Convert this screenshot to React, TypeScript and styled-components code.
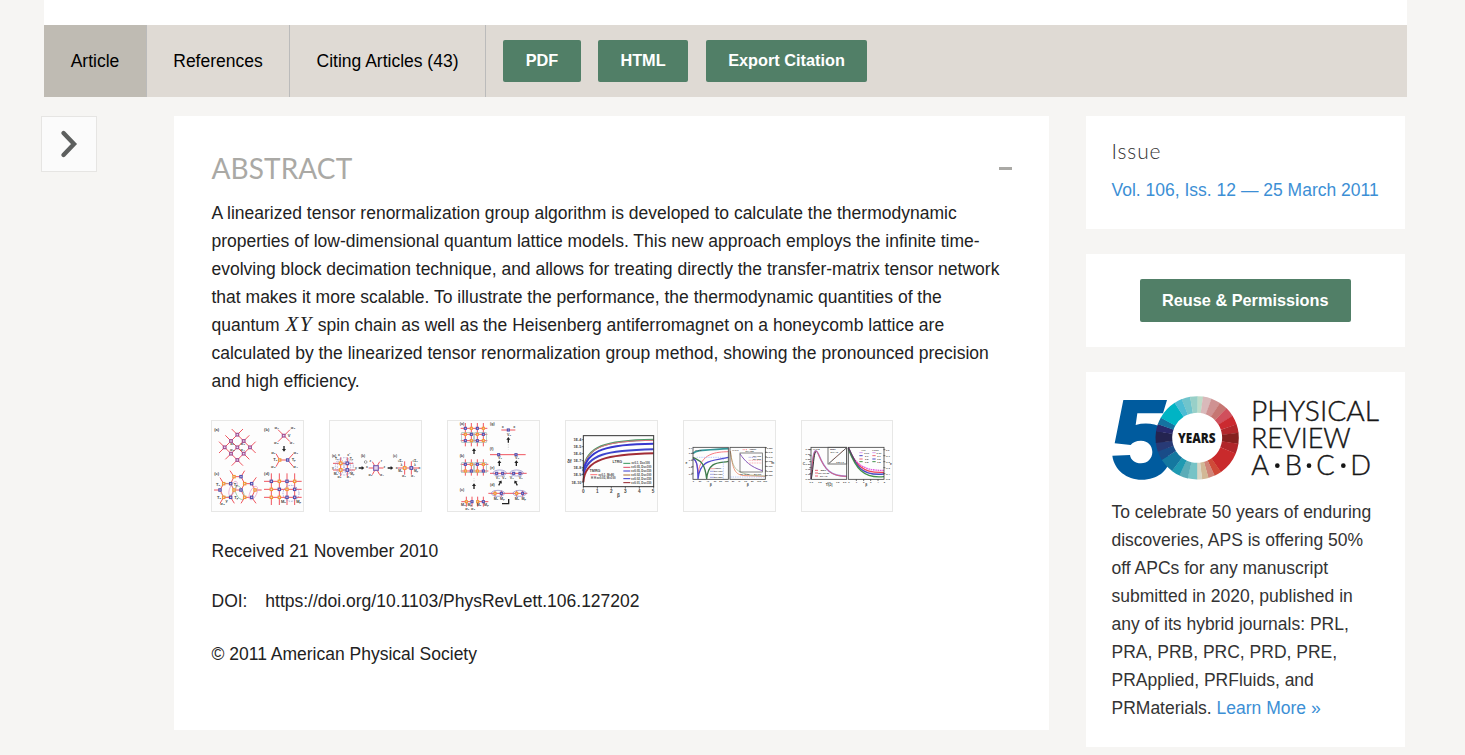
import React from "react";
import styled, { createGlobalStyle } from "styled-components";

const GlobalStyle = createGlobalStyle`
  * { box-sizing: border-box; }
  html, body { margin: 0; height: 755px; overflow: hidden; background: #f6f5f3; }
  body { font-family: "Liberation Sans", Arial, sans-serif; font-size: 17.5px; color: #222; }
`;

const Page = styled.div`
  width: 1465px;
  height: 755px;
  overflow: hidden;
`;

const Masthead = styled.div`
  width: 1363px;
  height: 25px;
  margin-left: 44px;
  background: #fff;
`;

const TabBar = styled.nav`
  display: flex;
  align-items: center;
  width: 1363px;
  height: 72px;
  margin-left: 44px;
  background: #dfdad4;
`;

const Tab = styled.a<{ $width: number; $active?: boolean }>`
  display: flex;
  align-items: center;
  justify-content: center;
  width: ${(p) => p.$width}px;
  height: 72px;
  border-right: 1px solid #bbb;
  background: ${(p) => (p.$active ? "#bfbbb3" : "transparent")};
  color: #000;
  white-space: nowrap;
`;

const TabActions = styled.div`
  display: flex;
  align-items: center;
  margin-left: 17px;
`;

const Button = styled.a<{ $width: number; $height?: number; $gap?: number }>`
  display: flex;
  align-items: center;
  justify-content: center;
  width: ${(p) => p.$width}px;
  height: ${(p) => p.$height ?? 42}px;
  margin-right: ${(p) => p.$gap ?? 0}px;
  padding-bottom: 1px;
  border-radius: 2px;
  background: #517f67;
  color: #fff;
  font-size: 16.3px;
  font-weight: 700;
  white-space: nowrap;
`;

const Columns = styled.div`
  display: flex;
  align-items: flex-start;
  padding: 19px 0 0 41px;
`;

const Toggle = styled.button`
  display: flex;
  align-items: center;
  justify-content: center;
  width: 56px;
  height: 56px;
  padding: 0 0 1px;
  border: 1px solid #e6e5e3;
  background: #fbfbfb;
`;

const Article = styled.main`
  width: 875px;
  height: 614px;
  margin: 0 37px 0 77px;
  padding: 35px 37px 0 37.5px;
  background: #fff;
`;

const SectionHead = styled.header`
  display: flex;
  align-items: center;
  justify-content: space-between;
  height: 35px;
`;

const SectionTitle = styled.h2`
  margin: 0;
  color: #aaa9a5;
  font: 400 28px/35px Lato, sans-serif;
  letter-spacing: 0.1px;
`;

const Minus = styled.span`
  width: 13px;
  height: 3px;
  background: #aaa9a5;
`;

const Abstract = styled.p`
  margin: 13px 0 25px;
  line-height: 28px;
  white-space: nowrap;
`;

const MathText = styled.i`
  padding-left: 1px;
  font: italic 21px/20px "Liberation Serif", serif;
  letter-spacing: 1.4px;
`;

const Thumbs = styled.div`
  display: flex;
  gap: 25px;
  margin-left: -0.5px;
`;

const Thumb = styled.a`
  display: block;
  width: 93px;
  height: 92px;
  border: 1px solid #e7e7e6;
  background: #fdfdfd;
  svg { display: block; }
  &:last-child { width: 92px; }
`;

const Meta = styled.p<{ $top: number }>`
  display: flex;
  gap: 17.8px;
  margin: ${(p) => p.$top}px 0 0;
  line-height: 28px;
`;

const Aside = styled.aside`
  display: flex;
  flex-direction: column;
  gap: 25px;
  width: 319px;
`;

const Card = styled.section<{ $height: number }>`
  height: ${(p) => p.$height}px;
  padding: 24px 26px 0 25.5px;
  background: #fff;
  white-space: nowrap;
`;

const CardTitle = styled.h3`
  margin: -1px 0 17px;
  color: #333;
  font: 300 21px/24px Lato, sans-serif;
  letter-spacing: 0.9px;
`;

const Centered = styled.div`
  display: flex;
  justify-content: center;
  padding-top: 1px;
`;

const Link = styled.a`
  color: #3c8fd5;
`;

const Promo = styled.p`
  margin: 18px 0 0;
  color: #333;
  line-height: 28px;
`;

const RED = "#f0555f";
const ORANGE = "#f39a35";
const NAVY = "#5350ae";
const PURPLE = "#a34e91";

type Pt = [number, number];

const Nodes = ({ at, color, s = 8 }: { at: Pt[]; color: string; s?: number }) => (
  <g fill="#e3d5ee" stroke={color} strokeWidth={3.4}>
    {at.map(([x, y]) => (
      <rect key={`${x}-${y}`} x={x - s / 2} y={y - s / 2} width={s} height={s} />
    ))}
  </g>
);

const Bonds = ({ d }: { d: string }) => <path d={d} stroke={RED} strokeWidth={3} fill="none" />;

const Marks = ({ items, size = 12 }: { items: [number, number, string][]; size?: number }) => (
  <g fontFamily="Liberation Sans, sans-serif" fontSize={size} fontWeight={700} fill="#444" textAnchor="middle">
    {items.map(([x, y, t]) => (
      <text key={`${x}-${y}`} x={x} y={y}>{t}</text>
    ))}
  </g>
);

const Arrow = ({ x, y, r }: { x: number; y: number; r: number }) => (
  <path d="M-8-2H1V-6L9 0L1 6V2H-8Z" fill="#222" transform={`translate(${x} ${y}) rotate(${r})`} />
);

const Plate = ({ box, children }: { box: string; children: React.ReactNode }) => (
  <Thumb>
    <svg width="91" height="90" viewBox={box}>{children}</svg>
  </Thumb>
);

const LatticeFigure = () => (
  <Plate box="36 33 273 270">
    <Bonds d="M57 129L129 57M76 148L148 76M95 167L167 95M95 57L167 129M76 76L148 148M57 95L129 167M234 59L270 95M270 59L234 95M228 131L239 150H263L280 131M228 170L239 150M263 150L280 170" />
    <Nodes color={PURPLE} at={[[112, 74], [93, 93], [131, 93], [74, 112], [112, 112], [150, 112], [93, 131], [131, 131], [112, 150], [251, 77]]} />
    <Bonds d="M90 182L102 200H123L134 182M102 200L92 221H71L60 240L71 262H92L102 240L92 221M123 200L134 221H155L165 240L155 262H134L123 240L134 221M102 240H123M165 240H185M60 240H42M71 221L60 203M155 221L169 202M71 262L60 280M92 262L103 280M134 262L123 280M155 262L168 280" />
    <g fill="none" strokeWidth={2}>
      <circle cx="80" cy="240" r="20" stroke="#9fc7a2" strokeDasharray="5 3" />
      <ellipse cx="119" cy="248" rx="11" ry="22" stroke="#83be91" transform="rotate(-25 119 248)" />
      <ellipse cx="99" cy="235" rx="9" ry="23" stroke="#e49dc8" transform="rotate(25 99 235)" />
      <ellipse cx="160" cy="249" rx="10" ry="22" stroke="#e49dc8" transform="rotate(25 160 249)" />
    </g>
    <Nodes color={ORANGE} at={[[239, 150], [102, 200], [71, 221], [134, 221], [102, 240], [165, 240], [71, 262], [134, 262]]} s={7} />
    <Nodes color={NAVY} at={[[263, 150], [123, 200], [92, 221], [155, 221], [60, 240], [123, 240], [92, 262], [155, 262]]} s={7} />
    <Bonds d="M192 214H305M192 238H305M192 262H305M214 190V285M238 190V285M261 190V285M284 190V285" />
    <circle cx="273" cy="250" r="24" fill="none" stroke="#8787c4" strokeWidth={2} strokeDasharray="5 3" />
    <Nodes color={ORANGE} at={[[238, 214], [284, 214], [214, 238], [261, 238], [238, 262], [214, 262]]} s={7} />
    <Nodes color={NAVY} at={[[214, 214], [261, 214], [238, 238], [284, 238], [261, 262], [284, 262]]} s={7} />
    <Arrow x={252} y={116} r={90} />
    <Marks items={[[50, 64, "(a)"], [200, 64, "(b)"], [50, 195, "(c)"], [200, 195, "(d)"], [230, 58, "σ₁"], [279, 58, "σ₂"], [229, 103, "σ₃"], [276, 103, "σ₄"], [267, 80, "V"], [97, 106, "σ₁"], [128, 106, "σ₂"], [97, 122, "σ₃"], [128, 122, "σ₄"], [226, 153, "Tₐ"], [281, 153, "Tᵦ"], [220, 174, "σ₃"], [287, 174, "σ₄"], [220, 131, "σ₁"], [287, 131, "σ₂"], [54, 227, "Tₐ"], [107, 227, "Tᵦ"], [57, 268, "Tₐ"], [109, 268, "Tᵦ"], [80, 276, "y"], [68, 286, "σ₃"], [250, 279, "Mₐ"], [296, 279, "Mᵦ"]]} />
  </Plate>
);

const ContractionFigure = () => (
  <Plate box="30 33 273 270">
    <Bonds d="M39 160H100M39 180H105M62 142V199M82 142V199M146 174H190M157 155L179 194M179 155L157 194M233 174H297M254 154V194M274 154V194" />
    <g fill="none" stroke="#9492cc" strokeWidth={2} strokeDasharray="5 3">
      <ellipse cx="73" cy="169" rx="27" ry="26" />
      <ellipse cx="62" cy="170" rx="10" ry="22" />
      <ellipse cx="82" cy="170" rx="10" ry="22" />
    </g>
    <Nodes color={ORANGE} at={[[62, 160], [62, 180], [254, 174]]} />
    <Nodes color={NAVY} at={[[82, 160], [82, 180], [274, 174]]} />
    <Nodes color="#7a5dac" at={[[168, 174]]} s={14} />
    <Arrow x={124} y={174} r={0} />
    <Arrow x={211} y={174} r={0} />
    <circle cx="137" cy="156" r="4" fill="none" stroke="#777" strokeWidth="2" />
    <Marks size={10} items={[[42, 140, "(a)"], [129, 140, "(b)"], [225, 140, "(c)"], [50, 151, "Tₐ"], [94, 151, "Tᵦ"], [47, 195, "Mₐ"], [97, 195, "Mᵦ"], [58, 205, "σ₃"], [86, 205, "σ₄"], [57, 138, "x"], [86, 138, "x'"], [108, 176, "y"], [39, 176, "y"], [141, 174, "x"], [193, 174, "z"], [151, 197, "σ₃"], [186, 197, "σ₄"], [151, 157, "z"], [184, 157, "r"], [241, 155, "√Σ₁"], [285, 155, "√Σ₂"], [241, 187, "Mₐ"], [288, 187, "Mᵦ"], [252, 202, "σ₃"], [279, 202, "σ₄"], [230, 177, "x"], [298, 177, "x"], [244, 169, "λ"], [285, 169, "λ"]]} />
  </Plate>
);

const EvolutionFigure = () => (
  <Plate box="24 33 273 270">
    <Bonds d="M62 55H142M62 73H142M62 92H142M76 39V109M94 39V109M112 39V109M130 39V109M62 163H145M62 183H145M76 148V197M94 148V197M112 148V197M130 148V197M64 275H96M116 275H145M79 260V290M96 260V290M113 260V290M130 260V290M184 60H226M150 134H257M150 190H260M145 250H262M165 242V260M184 242V260M230 242V260M248 242V260" />
    <g fill="none" stroke="#9cbcb5" strokeWidth={2}>
      <rect x="65" y="68" width="35" height="29" /><rect x="104" y="68" width="35" height="29" />
      <rect x="65" y="158" width="35" height="30" /><rect x="104" y="158" width="35" height="30" />
      <g stroke="#8680c3">
        <ellipse cx="179" cy="189" rx="20" ry="9" /><ellipse cx="230" cy="189" rx="20" ry="9" />
        <ellipse cx="174" cy="250" rx="20" ry="9" /><ellipse cx="239" cy="250" rx="20" ry="9" />
      </g>
    </g>
    <Nodes color={ORANGE} s={6} at={[[94, 55], [130, 55], [76, 73], [112, 73], [94, 92], [130, 92], [94, 163], [130, 163], [76, 183], [112, 183], [79, 275], [113, 275], [165, 250], [230, 250]]} />
    <Nodes color={NAVY} s={6} at={[[76, 55], [112, 55], [94, 73], [130, 73], [76, 92], [112, 92], [76, 163], [112, 163], [94, 183], [130, 183], [96, 275], [130, 275], [205, 60], [176, 134], [228, 134], [170, 190], [188, 190], [221, 190], [240, 190], [184, 250], [248, 250]]} />
    <Arrow x={102} y={124} r={-90} /><Arrow x={102} y={229} r={-90} />
    <Arrow x={205} y={90} r={-90} /><Arrow x={178} y={160} r={-90} /><Arrow x={229} y={160} r={-90} />
    <Arrow x={180} y={219} r={-60} /><Arrow x={228} y={219} r={-120} />
    <path d="M186 281H206V267" fill="none" stroke="#222" strokeWidth={4} />
    <path d="M102 205V216M205 102V118" stroke="#aaa" strokeWidth={2} strokeDasharray="2 3" />
    <Marks size={11} items={[[66, 45, "(a)"], [157, 45, "(g)"], [155, 120, "(f)"], [66, 142, "(b)"], [157, 177, "(e)"], [66, 242, "(c)"], [157, 229, "(d)"], [207, 77, "V₀"], [188, 55, "x"], [223, 55, "x"], [180, 148, "V₁"], [231, 148, "V₂"], [173, 207, "V₁"], [192, 207, "V₂"], [215, 207, "V₁"], [242, 207, "V₂"], [168, 269, "Mₐ"], [187, 269, "Mᵦ"], [231, 269, "Mₐ"], [251, 269, "Mᵦ"], [70, 289, "Mₐ"], [89, 289, "Mᵦ"], [117, 289, "Mₐ"], [139, 289, "Mᵦ"], [82, 299, "σ₁"], [99, 299, "σ₂"]]} />
  </Plate>
);

const EnergyPlot = () => (
  <Plate box="33 33 273 270">
    <g fill="none" strokeWidth={6}>
      <path d="M85 182C92 108 150 91 296 89" stroke="#4d9b68" />
      <path d="M85 180C94 110 150 93 296 91" stroke="#df7180" strokeWidth={3} />
      <path d="M85 184C95 120 155 102 296 101" stroke="#3737ce" />
      <path d="M85 195C96 133 155 121 296 118" stroke="#3e45cc" />
      <path d="M85 217C88 145 160 134 296 130" stroke="#a12c36" />
      <rect x="85" y="77" width="211" height="153" stroke="#333" strokeWidth={3} />
      <path d="M80 89h6M80 110h6M80 131h6M80 152h6M80 173h6M80 194h6M80 216h6M85 230v6M127 230v6M169 230v6M211 230v6M253 230v6M296 230v6" stroke="#333" strokeWidth={2} />
      <g strokeWidth={3}>
        <path d="M205 160h21" stroke="#34945b" /><path d="M205 172h21" stroke="#dc4a65" />
        <path d="M205 183h21M205 206h21" stroke="#3737ce" /><path d="M205 195h21" stroke="#aa6d30" />
        <path d="M205 218h21" stroke="#921f28" /><path d="M106 194h21" stroke="#ff7377" />
      </g>
    </g>
    <Marks size={11} items={[[67, 94, "1E-4"], [67, 115, "1E-5"], [67, 136, "1E-6"], [67, 157, "1E-7"], [67, 178, "1E-8"], [67, 199, "1E-9"], [64, 221, "1E-10"], [187, 159, "LTRG"], [120, 186, "TMRG"]]} />
    <Marks size={14} items={[[85, 249, "0"], [127, 249, "1"], [169, 249, "2"], [211, 249, "3"], [253, 249, "4"], [294, 249, "5"], [190, 261, "β"], [43, 158, "δf"]]} />
    <Marks size={8.5} items={[[154, 197, "ε=0.1, M=80"], [145, 208, "H H ε=0.05, M=100"], [257, 163, "ε=0.1, Dc=100"], [259, 175, "ε=0.05, Dc=100"], [259, 186, "ε=0.05, Dc=150"], [259, 198, "ε=0.02, Dc=100"], [259, 210, "ε=0.02, Dc=150"], [259, 221, "ε=0.01, Dc=150"]]} />
  </Plate>
);

const HeatPlot = () => (
  <Plate box="27 33 273 270">
    <g fill="none" strokeWidth={4}>
      <path d="M54 130C64 120 80 121 160 116" stroke="#359799" strokeWidth={5} />
      <path d="M54 145C65 150 67 170 69 190C77 128 125 126 160 125" stroke="#f87b82" strokeWidth={3} />
      <path d="M54 145C65 151 68 160 69 207C75 143 120 153 160 142" stroke="#5048d1" />
      <path d="M54 142C75 153 89 154 95 207C100 150 136 160 160 154" stroke="#407d4c" />
      <path d="M65 142H145V207" stroke="#9ab3ff" strokeWidth={2} strokeDasharray="4 3" />
      <path d="M166 123C174 178 178 195 210 197L270 199" stroke="#ef987b" strokeWidth={3} />
      <path d="M166 125C175 177 177 195 270 198" stroke="#72945a" strokeWidth={1.5} />
      <path d="M166 201H270" stroke="#9ab3ff" strokeWidth={2} strokeDasharray="4 3" />
      <rect x="54" y="112" width="106" height="96" stroke="#444" strokeWidth={2.5} />
      <rect x="165" y="112" width="106" height="96" stroke="#444" strokeWidth={2.5} />
      <rect x="195" y="129" width="67" height="57" stroke="#555" strokeWidth={2.2} />
      <path d="M195 132C210 153 225 170 262 182" stroke="#8658bb" strokeWidth={3} />
      <path d="M221 151h38M221 159h38" stroke="#ff8b92" strokeWidth={2} strokeDasharray="3 2" />
      <path d="M221 142h25" stroke="#6f77dd" strokeWidth={2} strokeDasharray="3 2" />
      <path d="M203 119h15" stroke="#ff8b92" strokeWidth={3} strokeDasharray="3 2" />
      <path d="M105 176h14" stroke="#f87b82" strokeWidth={2} /><path d="M105 184h14M105 193h14M105 202h14" stroke="#777bd7" strokeWidth={2} />
      <path d="M270 113h6M270 127h6M270 141h6M270 155h6M270 169h6M270 183h6M270 197h6M49 130h6M49 150h6M49 170h6M49 190h6" stroke="#333" strokeWidth={2} />
    </g>
    <Marks size={7} items={[[70, 122, "H=0.8"], [181, 122, "H=0.9"], [234, 120, "TMRG"], [224, 127, "Dc=150"], [246, 142, "Dc=100"], [246, 151, "Dc=200"], [46, 116, "0.1"], [46, 132, "0.0"], [46, 154, "-0.1"], [46, 175, "-0.2"], [46, 195, "-0.3"], [55, 217, "0"], [75, 217, "20"], [98, 217, "40"], [120, 217, "60"], [137, 217, "80"], [155, 217, "100"], [174, 217, "20"], [192, 217, "40"], [212, 217, "60"], [232, 217, "80"], [252, 217, "100"], [270, 217, "120"], [284, 116, "0.050"], [284, 129, "0.045"], [284, 143, "0.040"], [284, 157, "0.035"], [284, 171, "0.030"], [284, 185, "0.025"], [284, 199, "0.020"], [129, 178, "TMRG"], [130, 187, "Dc=100"], [130, 196, "Dc=150"], [130, 204, "Dc=200"], [209, 194, "20  40  60"], [248, 194, "80  100"]]} />
    <Marks size={10} items={[[107, 228, "β"], [218, 228, "β"], [34, 163, "e"], [293, 163, "m"]]} />
  </Plate>
);

const MagnetPlot = () => (
  <Plate box="27 33 273 270">
    <g fill="none" strokeWidth={4}>
      <path d="M54 207C60 118 67 112 76 132C97 183 114 198 161 199" stroke="#9a91ed" strokeWidth={5} />
      <path d="M54 207C60 118 67 112 76 132C97 183 114 198 161 199" stroke="#e6535c" strokeWidth={2.5} />
      <path d="M55 207C62 165 62 134 68 125" stroke="#333" strokeWidth={3} />
      <path d="M166 113C185 155 202 183 273 181" stroke="#e255de" strokeDasharray="5 2" />
      <path d="M166 114C184 160 207 191 273 187" stroke="#ee4055" />
      <path d="M166 115C187 166 205 199 273 192" stroke="#4949c4" />
      <path d="M166 116C188 174 210 207 273 200" stroke="#44914b" />
      <path d="M166 113C174 128 180 145 187 154" stroke="#554a61" />
      <rect x="54" y="112" width="107" height="96" stroke="#444" strokeWidth={2.5} />
      <rect x="166" y="112" width="107" height="96" stroke="#444" strokeWidth={2.5} />
      <rect x="105" y="112" width="56" height="50" stroke="#555" strokeWidth={2.5} />
      <path d="M108 160L160 114" stroke="#555" strokeWidth={3} />
      <path d="M118 150L151 121" stroke="#d68878" strokeWidth={2} strokeDasharray="3 2" />
      <path d="M199 128h10M238 128h10" stroke="#d9a0ed" strokeWidth={3} /><path d="M199 137h10M238 147h10" stroke="#4949c4" strokeWidth={3} />
      <path d="M199 147h10M238 137h10M66 181h9M66 189h9M66 198h9" stroke="#ed6476" strokeWidth={3} /><path d="M199 155h10M238 155h10" stroke="#44914b" strokeWidth={3} />
      <path d="M49 119h6M49 137h6M49 155h6M49 173h6M49 191h6M271 119h6M271 137h6M271 155h6M271 173h6M271 191h6M190 208v5M212 208v5M233 208v5M255 208v5" stroke="#333" strokeWidth={2} />
    </g>
    <Marks size={7.5} items={[[70, 121, "H=0.8"], [211, 122, "H/J"], [248, 122, "LTRG"], [221, 131, "0.01"], [221, 140, "0.1"], [221, 149, "0.5"], [221, 158, "0.8"], [258, 131, "0.01"], [258, 140, "0.1"], [258, 149, "0.5"], [258, 158, "0.8"], [45, 121, "0.35"], [45, 136, "0.30"], [45, 151, "0.25"], [45, 166, "0.20"], [45, 181, "0.15"], [45, 196, "0.10"], [45, 210, "0.00"], [55, 218, "0.0"], [81, 218, "0.5"], [108, 218, "1.0"], [134, 218, "1.5"], [155, 218, "2.0"], [168, 218, "0"], [190, 218, "1"], [212, 218, "2"], [233, 218, "3"], [255, 218, "4"], [274, 218, "5"], [284, 122, "0.0"], [284, 140, "-0.1"], [284, 158, "-0.2"], [284, 176, "-0.3"], [284, 194, "-0.4"], [284, 211, "-0.5"], [91, 183, "QMC"], [92, 192, "Dc=10-60"], [92, 201, "Dc=40"], [120, 119, "QMC"], [124, 128, "Dc=40"], [141, 159, "0.8 1.0"]]} />
    <Marks size={10} items={[[108, 228, "T/|J|"], [220, 228, "β"], [33, 164, "C"], [294, 164, "e"]]} />
  </Plate>
);

const RING: [number, number, string][] = [
  [0, 8, "#bddcc9"], [8, 20, "#d9b9ba"], [20, 33, "#cf9292"], [33, 45, "#c67672"], [45, 58, "#d0505c"],
  [58, 71, "#cb2a30"], [71, 83, "#b3282c"], [83, 98, "#86211f"], [98, 112, "#b0262a"], [112, 145, "#c92a2c"],
  [145, 155, "#cf4a38"], [155, 164, "#d08478"], [164, 173, "#d2b896"], [173, 180, "#d8d6c5"],
  [180, 193, "#76c3c6"], [193, 205, "#5cadb8"], [205, 217, "#1f9ab2"], [217, 238, "#1478a0"],
  [238, 251, "#194c88"], [251, 263, "#283a76"], [263, 279, "#242450"], [279, 289, "#2a2a6c"],
  [289, 299, "#1572a0"], [299, 327, "#00b4c4"], [327, 338, "#4cbcd4"], [338, 350, "#70c4cc"], [350, 360, "#98d0c8"],
];

const slice = (a: number, b: number) => {
  const p = (deg: number, r: number) => {
    const t = (deg * Math.PI) / 180;
    return `${(351.5 + r * Math.sin(t)).toFixed(2)} ${(203.5 - r * Math.cos(t)).toFixed(2)}`;
  };
  const e = b + 0.4;
  return `M${p(a, 125)}A125 125 0 0 1 ${p(e, 125)}L${p(e, 75)}A75 75 0 0 0 ${p(a, 75)}Z`;
};

const LogoSvg = styled.svg`
  display: block;
  overflow: visible;
  text { fill: #161616; }
`;

const Logo = () => (
  <LogoSvg width="268" height="84" viewBox="96 78 804 252">
    <path fill="#005b9e" d="M130 90H261L249 130H172L167 165C195 157 225 161 245 172L268 275C262 300 235 329 185 329C140 329 103 300 97 257L150 255C152 270 165 280 183 280C203 280 217 265 217 246C217 228 205 212 183 212C168 212 158 217 152 225L104 220Z" />
    <circle cx="351.5" cy="203.5" r="76" fill="#fff" />
    {RING.map(([a, b, c]) => <path key={a} d={slice(a, b)} fill={c} />)}
    <text x="294" y="219" fontFamily="Open Sans" fontWeight="800" fontSize="40" textLength="113" lengthAdjust="spacingAndGlyphs">YEARS</text>
    <g fontFamily="Lato, sans-serif" fontWeight="300" fontSize="82" stroke="#161616" strokeWidth="1.2">
      <text x="513" y="152" textLength="384" lengthAdjust="spacingAndGlyphs">PHYSICAL</text>
      <text x="513" y="234" textLength="299" lengthAdjust="spacingAndGlyphs">REVIEW</text>
      <text x="514" y="316">A</text>
      <text x="614" y="316">B</text>
      <text x="709" y="316">C</text>
      <text x="811" y="316">D</text>
    </g>
    <g fill="#161616"><circle cx="592" cy="287" r="7" /><circle cx="687" cy="287" r="7" /><circle cx="790" cy="287" r="7" /></g>
  </LogoSvg>
);

export default function App() {
  return (
    <Page>
      <GlobalStyle />
      <Masthead />
      <TabBar>
        <Tab $width={103} $active>Article</Tab>
        <Tab $width={143}>References</Tab>
        <Tab $width={196}>Citing Articles (43)</Tab>
        <TabActions>
          <Button $width={78} $gap={17}>PDF</Button>
          <Button $width={90} $gap={18}>HTML</Button>
          <Button $width={161}>Export Citation</Button>
        </TabActions>
      </TabBar>
      <Columns>
        <Toggle aria-label="Show navigation">
          <svg width="18" height="30" viewBox="0 0 18 30">
            <path d="M3.5 4L14 15L3.5 26" fill="none" stroke="#5d5f5e" strokeWidth="4.4" strokeLinecap="round" />
          </svg>
        </Toggle>
        <Article>
          <SectionHead>
            <SectionTitle>ABSTRACT</SectionTitle>
            <Minus />
          </SectionHead>
          <Abstract>
            A linearized tensor renormalization group algorithm is developed to calculate the thermodynamic<br />
            properties of low-dimensional quantum lattice models. This new approach employs the infinite time-<br />
            evolving block decimation technique, and allows for treating directly the transfer-matrix tensor network<br />
            that makes it more scalable. To illustrate the performance, the thermodynamic quantities of the<br />
            quantum <MathText>XY</MathText> spin chain as well as the Heisenberg antiferromagnet on a honeycomb lattice are<br />
            calculated by the linearized tensor renormalization group method, showing the pronounced precision<br />
            and high efficiency.
          </Abstract>
          <Thumbs>
            <LatticeFigure />
            <ContractionFigure />
            <EvolutionFigure />
            <EnergyPlot />
            <HeatPlot />
            <MagnetPlot />
          </Thumbs>
          <Meta $top={25}>Received 21 November 2010</Meta>
          <Meta $top={22}><span>DOI:</span><span>https://doi.org/10.1103/PhysRevLett.106.127202</span></Meta>
          <Meta $top={25}>© 2011 American Physical Society</Meta>
        </Article>
        <Aside>
          <Card $height={113}>
            <CardTitle>Issue</CardTitle>
            <Link>Vol. 106, Iss. 12 — 25 March 2011</Link>
          </Card>
          <Card $height={93}>
            <Centered><Button $width={211} $height={43}>Reuse &amp; Permissions</Button></Centered>
          </Card>
          <Card $height={375}>
            <Logo />
            <Promo>
              To celebrate 50 years of enduring<br />
              discoveries, APS is offering 50%<br />
              off APCs for any manuscript<br />
              submitted in 2020, published in<br />
              any of its hybrid journals: PRL,<br />
              PRA, PRB, PRC, PRD, PRE,<br />
              PRApplied, PRFluids, and<br />
              PRMaterials. <Link>Learn More »</Link>
            </Promo>
          </Card>
        </Aside>
      </Columns>
    </Page>
  );
}
